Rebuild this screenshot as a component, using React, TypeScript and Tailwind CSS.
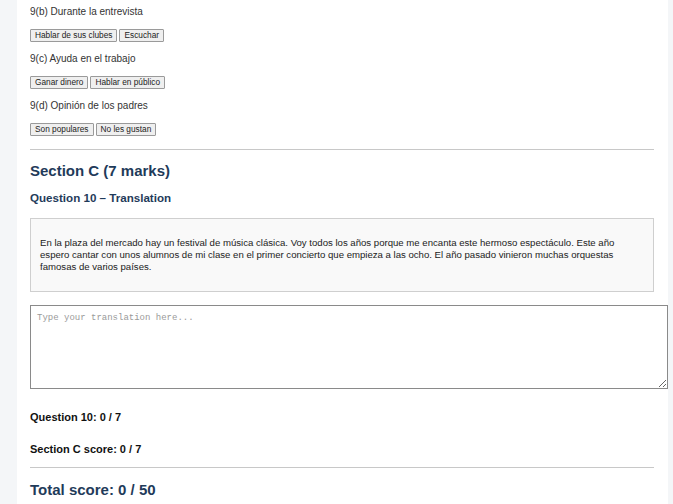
const font = { fontFamily: '"Liberation Sans", Arial, sans-serif' };

const questions = [
  { label: "9(b) Durante la entrevista", options: ["Hablar de sus clubes", "Escuchar"] },
  { label: "9(c) Ayuda en el trabajo", options: ["Ganar dinero", "Hablar en público"] },
  { label: "9(d) Opinión de los padres", options: ["Son populares", "No les gustan"] },
];

function OptionButton({ text }: { text: string }) {
  return (
    <button className="h-[13px] px-[4px] border border-[#9a9a9a] bg-[#efefef] text-[8.3px] leading-[11px] text-[#222] rounded-[1px]">
      {text}
    </button>
  );
}

export default function App() {
  return (
    <div className="min-h-screen bg-[#f4f6f8] pl-[17px] pr-[5px]" style={font}>
      <div className="bg-white pl-[13px] pr-[14px] pt-[6px] pb-[20px] h-[504px]">
        {questions.map((q) => (
          <div key={q.label} className="mb-[11px]">
            <p className="text-[10px] leading-[12px] text-[#333] mb-[11px]">{q.label}</p>
            <div className="flex gap-[2px]">
              {q.options.map((o) => (
                <OptionButton key={o} text={o} />
              ))}
            </div>
          </div>
        ))}

        <div className="h-px bg-[#c8c8c8] mt-[13px]" />

        <h2 className="mt-[12px] text-[15px] leading-[18px] font-bold text-[#1f3b5a]">Section C (7 marks)</h2>
        <h3 className="mt-[11px] text-[11.6px] leading-[14px] font-bold text-[#1f3b5a]">Question 10 – Translation</h3>

        <div className="mt-[13px] border border-[#cfcfcf] bg-[#f9f9f9] px-[9px] py-[18px]">
          <p className="text-[9.6px] leading-[12px] text-[#222]">
            En la plaza del mercado hay un festival de música clásica. Voy todos los años porque me encanta este
            hermoso espectáculo. Este año espero cantar con unos alumnos de mi clase en el primer concierto que empieza
            a las ocho. El año pasado vinieron muchas orquestas famosas de varios países.
          </p>
        </div>

        <textarea
          className="mt-[13px] block w-[638px] h-[84px] border border-[#8a8a8a] bg-white px-[6px] py-[7px] text-[9px] leading-[11px] placeholder:text-[#9a9a9a] outline-none"
          style={{ fontFamily: '"Liberation Mono", "Courier New", monospace' }}
          placeholder="Type your translation here..."
        />

        <p className="mt-[22px] text-[11px] leading-[12px] font-bold text-[#111]">Question 10: 0 / 7</p>
        <p className="mt-[20px] text-[11px] leading-[12px] font-bold text-[#111]">Section C score: 0 / 7</p>

        <div className="h-px bg-[#c8c8c8] mt-[12px]" />

        <h2 className="mt-[13px] text-[15px] leading-[18px] font-bold text-[#1f3b5a]">Total score: 0 / 50</h2>
      </div>
    </div>
  );
}
